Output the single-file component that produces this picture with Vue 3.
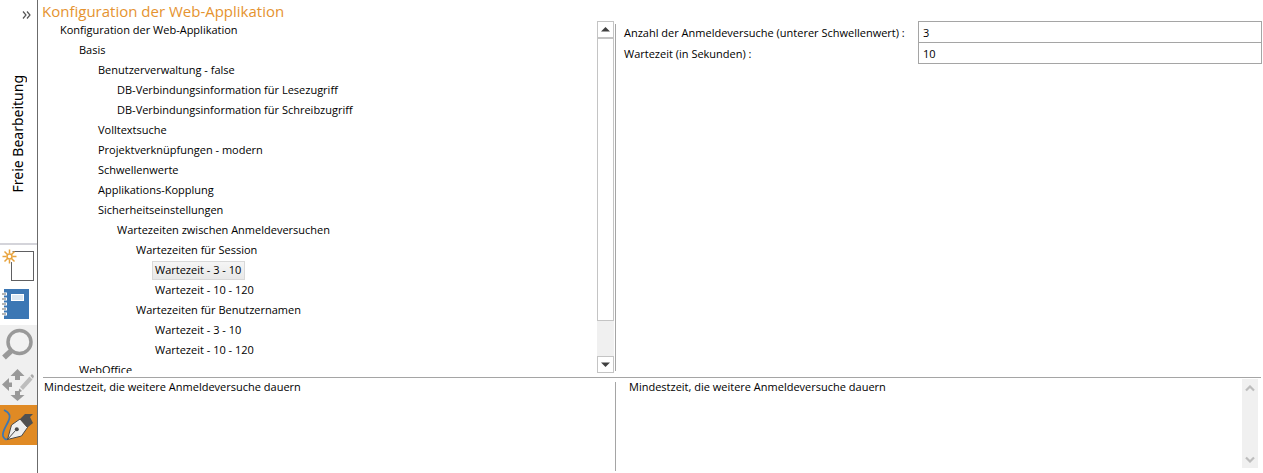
<script setup>
import { ref } from 'vue'

const nodes = [
  { depth: 0, text: 'Konfiguration der Web-Applikation' },
  { depth: 1, text: 'Basis' },
  { depth: 2, text: 'Benutzerverwaltung - false' },
  { depth: 3, text: 'DB-Verbindungsinformation für Lesezugriff' },
  { depth: 3, text: 'DB-Verbindungsinformation für Schreibzugriff' },
  { depth: 2, text: 'Volltextsuche' },
  { depth: 2, text: 'Projektverknüpfungen - modern' },
  { depth: 2, text: 'Schwellenwerte' },
  { depth: 2, text: 'Applikations-Kopplung' },
  { depth: 2, text: 'Sicherheitseinstellungen' },
  { depth: 3, text: 'Wartezeiten zwischen Anmeldeversuchen' },
  { depth: 4, text: 'Wartezeiten für Session' },
  { depth: 5, text: 'Wartezeit - 3 - 10' },
  { depth: 5, text: 'Wartezeit - 10 - 120' },
  { depth: 4, text: 'Wartezeiten für Benutzernamen' },
  { depth: 5, text: 'Wartezeit - 3 - 10' },
  { depth: 5, text: 'Wartezeit - 10 - 120' },
  { depth: 1, text: 'WebOffice' },
]
const selected = ref(12)
const attempts = ref('3')
const wait = ref('10')
const hint = 'Mindestzeit, die weitere Anmeldeversuche dauern'
</script>

<template>
  <div class="app">
    <aside class="sidebar">
      <button class="expand" aria-label="Leiste ausklappen">
        <svg width="9" height="8" viewBox="0 0 9 8"><path d="M1 .5 4 4 1 7.500M5 .5 8 4 5 7.500" fill="none" stroke="#555" stroke-width="1.200" /></svg>
      </button>
      <div class="mode"><span>Freie Bearbeitung</span></div>
      <nav class="tools">
        <button class="tool" aria-label="Neu">
          <svg width="37" height="40" viewBox="0 0 37 40">
            <rect x="11.500" y="6.500" width="22" height="29" fill="#fff" stroke="#606062" />
            <circle cx="9.500" cy="11.500" r="6" fill="#fff" />
            <path d="M9.500 4.500v4M9.500 14.500v4M2.500 11.500h4M12.500 11.500h4M4.500 6.500l3 3M11.500 13.500l3 3M14.500 6.500l-3 3M7.500 13.500l-3 3" stroke="#e8a33d" stroke-width="1.500" />
            <circle cx="9.500" cy="11.500" r="2.500" fill="#fff" stroke="#e8a33d" stroke-width="1.500" />
          </svg>
        </button>
        <button class="tool" aria-label="Projektbuch">
          <svg width="37" height="40" viewBox="0 0 37 40">
            <rect x="4" y="4" width="25" height="30" fill="#3c77b4" />
            <rect x="11" y="9" width="13" height="7" fill="#fff" />
            <rect x="12" y="10" width="11" height="5" fill="#dce8f3" />
            <path d="M4 9h3M4 14h3M4 19h3M4 24h3M4 29h3" stroke="#fff" stroke-width="3" />
            <path d="M2 9h4M2 14h4M2 19h4M2 24h4M2 29h4" stroke="#b5b5b5" stroke-width="2" />
          </svg>
        </button>
        <button class="tool off" aria-label="Suchen" disabled>
          <svg width="37" height="40" viewBox="0 0 37 40">
            <circle cx="19.500" cy="17" r="11.500" fill="#f2f2f2" stroke="#999" stroke-width="3.500" />
            <path d="M11 26 4 32.500" stroke="#999" stroke-width="5.500" />
          </svg>
        </button>
        <button class="tool off" aria-label="Verschieben" disabled>
          <svg width="37" height="40" viewBox="0 0 37 40">
            <g fill="#999">
              <path d="M17.500 4 24.500 11H20v4h-5v-4h-4.500z" />
              <path d="M17.500 36 24.500 30H20v-4h-5v4h-4.500z" />
              <path d="M2 19.500 9 13v4.500h3v4.500H9v4z" />
            </g>
            <path d="M18 28l1.500-4.500L22 26z" fill="#999" />
            <path d="M20 22 29.500 11.500l3 3L23 25z" fill="#bdbdbd" />
            <path d="M30.300 10.700 32 9l2 2-1 2.700z" fill="#aaa" />
          </svg>
        </button>
        <button class="tool active" aria-label="Freie Bearbeitung">
          <svg width="37" height="40" viewBox="0 0 37 40">
            <path d="M4 5c6 3 7 6 4 12s-6 10-5 14c1 3 3 4 5 3" fill="none" stroke="#3c77b4" stroke-width="1.800" />
            <path d="M7.500 34.500 11.500 20 20 14l7.500 8.500-6 8.500z" fill="#eee" stroke="#4a4a4a" />
            <path d="M7.500 34.500 15.500 25.500" stroke="#4a4a4a" />
            <circle cx="16.800" cy="24.300" r="2" fill="#4a4a4a" />
            <path d="M20 14 25 9h8l-3 3 3 6-5.500 4.500z" fill="#505050" />
          </svg>
        </button>
      </nav>
    </aside>

    <main class="main">
      <h1>Konfiguration der Web-Applikation</h1>

      <section class="upper">
        <div class="tree-pane">
          <ul class="tree">
            <li v-for="(n, i) in nodes" :key="i" :class="'d' + n.depth">
              <button :class="['node', { selected: i === selected }]" @click="selected = i">{{ n.text }}</button>
            </li>
          </ul>
          <div class="scroll">
            <button class="step" aria-label="Nach oben"><svg width="9" height="5" viewBox="0 0 9 5"><path d="M4.500 0 9 4.500H0z" fill="#404040" /></svg></button>
            <div class="thumb"></div>
            <div class="rest"></div>
            <button class="step" aria-label="Nach unten"><svg width="9" height="5" viewBox="0 0 9 5"><path d="M4.500 5 0 .5h9z" fill="#404040" /></svg></button>
          </div>
        </div>
        <form class="form" @submit.prevent>
          <label for="attempts">Anzahl der Anmeldeversuche (unterer Schwellenwert) :</label>
          <input id="attempts" v-model="attempts" type="text">
          <label for="wait">Wartezeit (in Sekunden) :</label>
          <input id="wait" v-model="wait" type="text">
        </form>
      </section>

      <section class="lower">
        <p class="hint">{{ hint }}</p>
        <div class="detail">
          <textarea aria-label="Beschreibung" readonly :value="hint"></textarea>
          <div class="faint">
            <svg width="10" height="7" viewBox="0 0 10 7"><path d="M1 5.500 5 1.500 9 5.500" fill="none" stroke="#bdbdbd" stroke-width="2.200" /></svg>
            <svg width="10" height="7" viewBox="0 0 10 7"><path d="M1 1.500 5 5.500 9 1.500" fill="none" stroke="#bdbdbd" stroke-width="2.200" /></svg>
          </div>
        </div>
      </section>
    </main>
  </div>
</template>

<style>
body { margin: 0; background: #fff; }
</style>

<style scoped>
.app {
  display: flex;
  height: 100vh;
  overflow: hidden;
  color: #000;
  font-family: "Open Sans", "Noto Sans", sans-serif;
  font-size: 11px;
  line-height: 16px;
}
*, *::before { box-sizing: border-box; }
button { margin: 0; padding: 0; border: 0; background: none; font: inherit; color: inherit; }
svg { display: block; }

.sidebar {
  flex: none;
  display: flex;
  flex-direction: column;
  width: 38px;
  padding-bottom: 28px;
  border-right: 1px solid #6b6b6b;
}
.expand { align-self: flex-end; padding: 11px 6px 5px; }
.mode {
  flex: 1;
  display: flex;
  justify-content: center;
  align-items: center;
  padding-right: 2px;
  border-bottom: 2px solid #d4d4da;
  font-family: "Noto Sans", "Open Sans", sans-serif;
  font-size: 14px;
  line-height: 20px;
}
.mode span { writing-mode: vertical-rl; transform: rotate(180deg); }
.tool { display: block; width: 37px; height: 40px; }
.off { background: #f0f0f0; }
.active { background: #e08a24; }

.main {
  flex: 1;
  min-width: 0;
  display: grid;
  grid-template-rows: auto minmax(0, 1fr) 96px;
}
h1 {
  margin: 0;
  padding: 2px 0 0 4px;
  color: #e5932f;
  font-size: 15px;
  font-weight: 400;
  line-height: 19px;
}
.upper, .lower { display: grid; grid-template-columns: 578fr 647fr; min-height: 0; }
.upper { padding-bottom: 4px; }
.tree-pane { display: flex; min-height: 0; padding-right: 1px; position: relative; }
.tree-pane::before, .hint::before {
  content: "";
  position: absolute;
  top: 3px;
  right: 0;
  bottom: 2px;
  width: 1px;
  background: #a5a5a5;
}
.tree { flex: 1; margin: 0; padding: 0 0 0 19px; overflow: hidden; list-style: none; }
.tree li { height: 20px; }
.d1 { padding-left: 19px; }
.d2 { padding-left: 38px; }
.d3 { padding-left: 57px; }
.d4 { padding-left: 76px; }
.d5 { padding-left: 95px; }
.node { height: 19px; padding: 0 3px 1px 2px; border: 1px solid transparent; line-height: 16px; white-space: nowrap; }
.selected { border-color: #d9d9d9; background: linear-gradient(#f5f5f5, #e8e8e8); }

.scroll { display: flex; flex-direction: column; width: 17px; margin-right: 1px; background: #f0f0f0; }
.step { flex: none; display: flex; align-items: center; justify-content: center; height: 17px; border: 1px solid #c4c4c4; background: #fff; }
.thumb { flex: 283; border: 1px solid #c4c4c4; background: #fff; }
.rest { flex: 35; }

.form {
  display: grid;
  grid-template-columns: 286px 1fr;
  grid-auto-rows: 21px;
  align-content: start;
  column-gap: 8px;
  padding: 0 1px 0 8px;
}
.form label { padding-top: 4px; font-weight: 500; white-space: nowrap; }
.form input {
  height: 22px;
  min-width: 0;
  padding: 0 4px;
  border: 1px solid #a5a5a5;
  border-radius: 0;
  background: #fff;
  color: #000;
  font: inherit;
  outline: 0;
}

.lower { position: relative; }
.lower::before {
  content: "";
  position: absolute;
  top: 0;
  left: 5px;
  right: 2px;
  height: 1px;
  background: #a5a5a5;
}
.hint { position: relative; margin: 0; padding: 2px 0 0 6px; }
.hint::before { top: 5px; }
.detail { display: flex; padding: 2px 5px 5px 13px; }
textarea {
  flex: 1;
  min-width: 0;
  padding: 0;
  border: 0;
  outline: 0;
  resize: none;
  overflow: hidden;
  background: none;
  color: #000;
  font: inherit;
  font-weight: 500;
}
.faint {
  display: flex;
  flex-direction: column;
  align-items: center;
  justify-content: space-between;
  width: 16px;
  padding: 6px 0 5px;
  background: #f0f0f0;
}
</style>
